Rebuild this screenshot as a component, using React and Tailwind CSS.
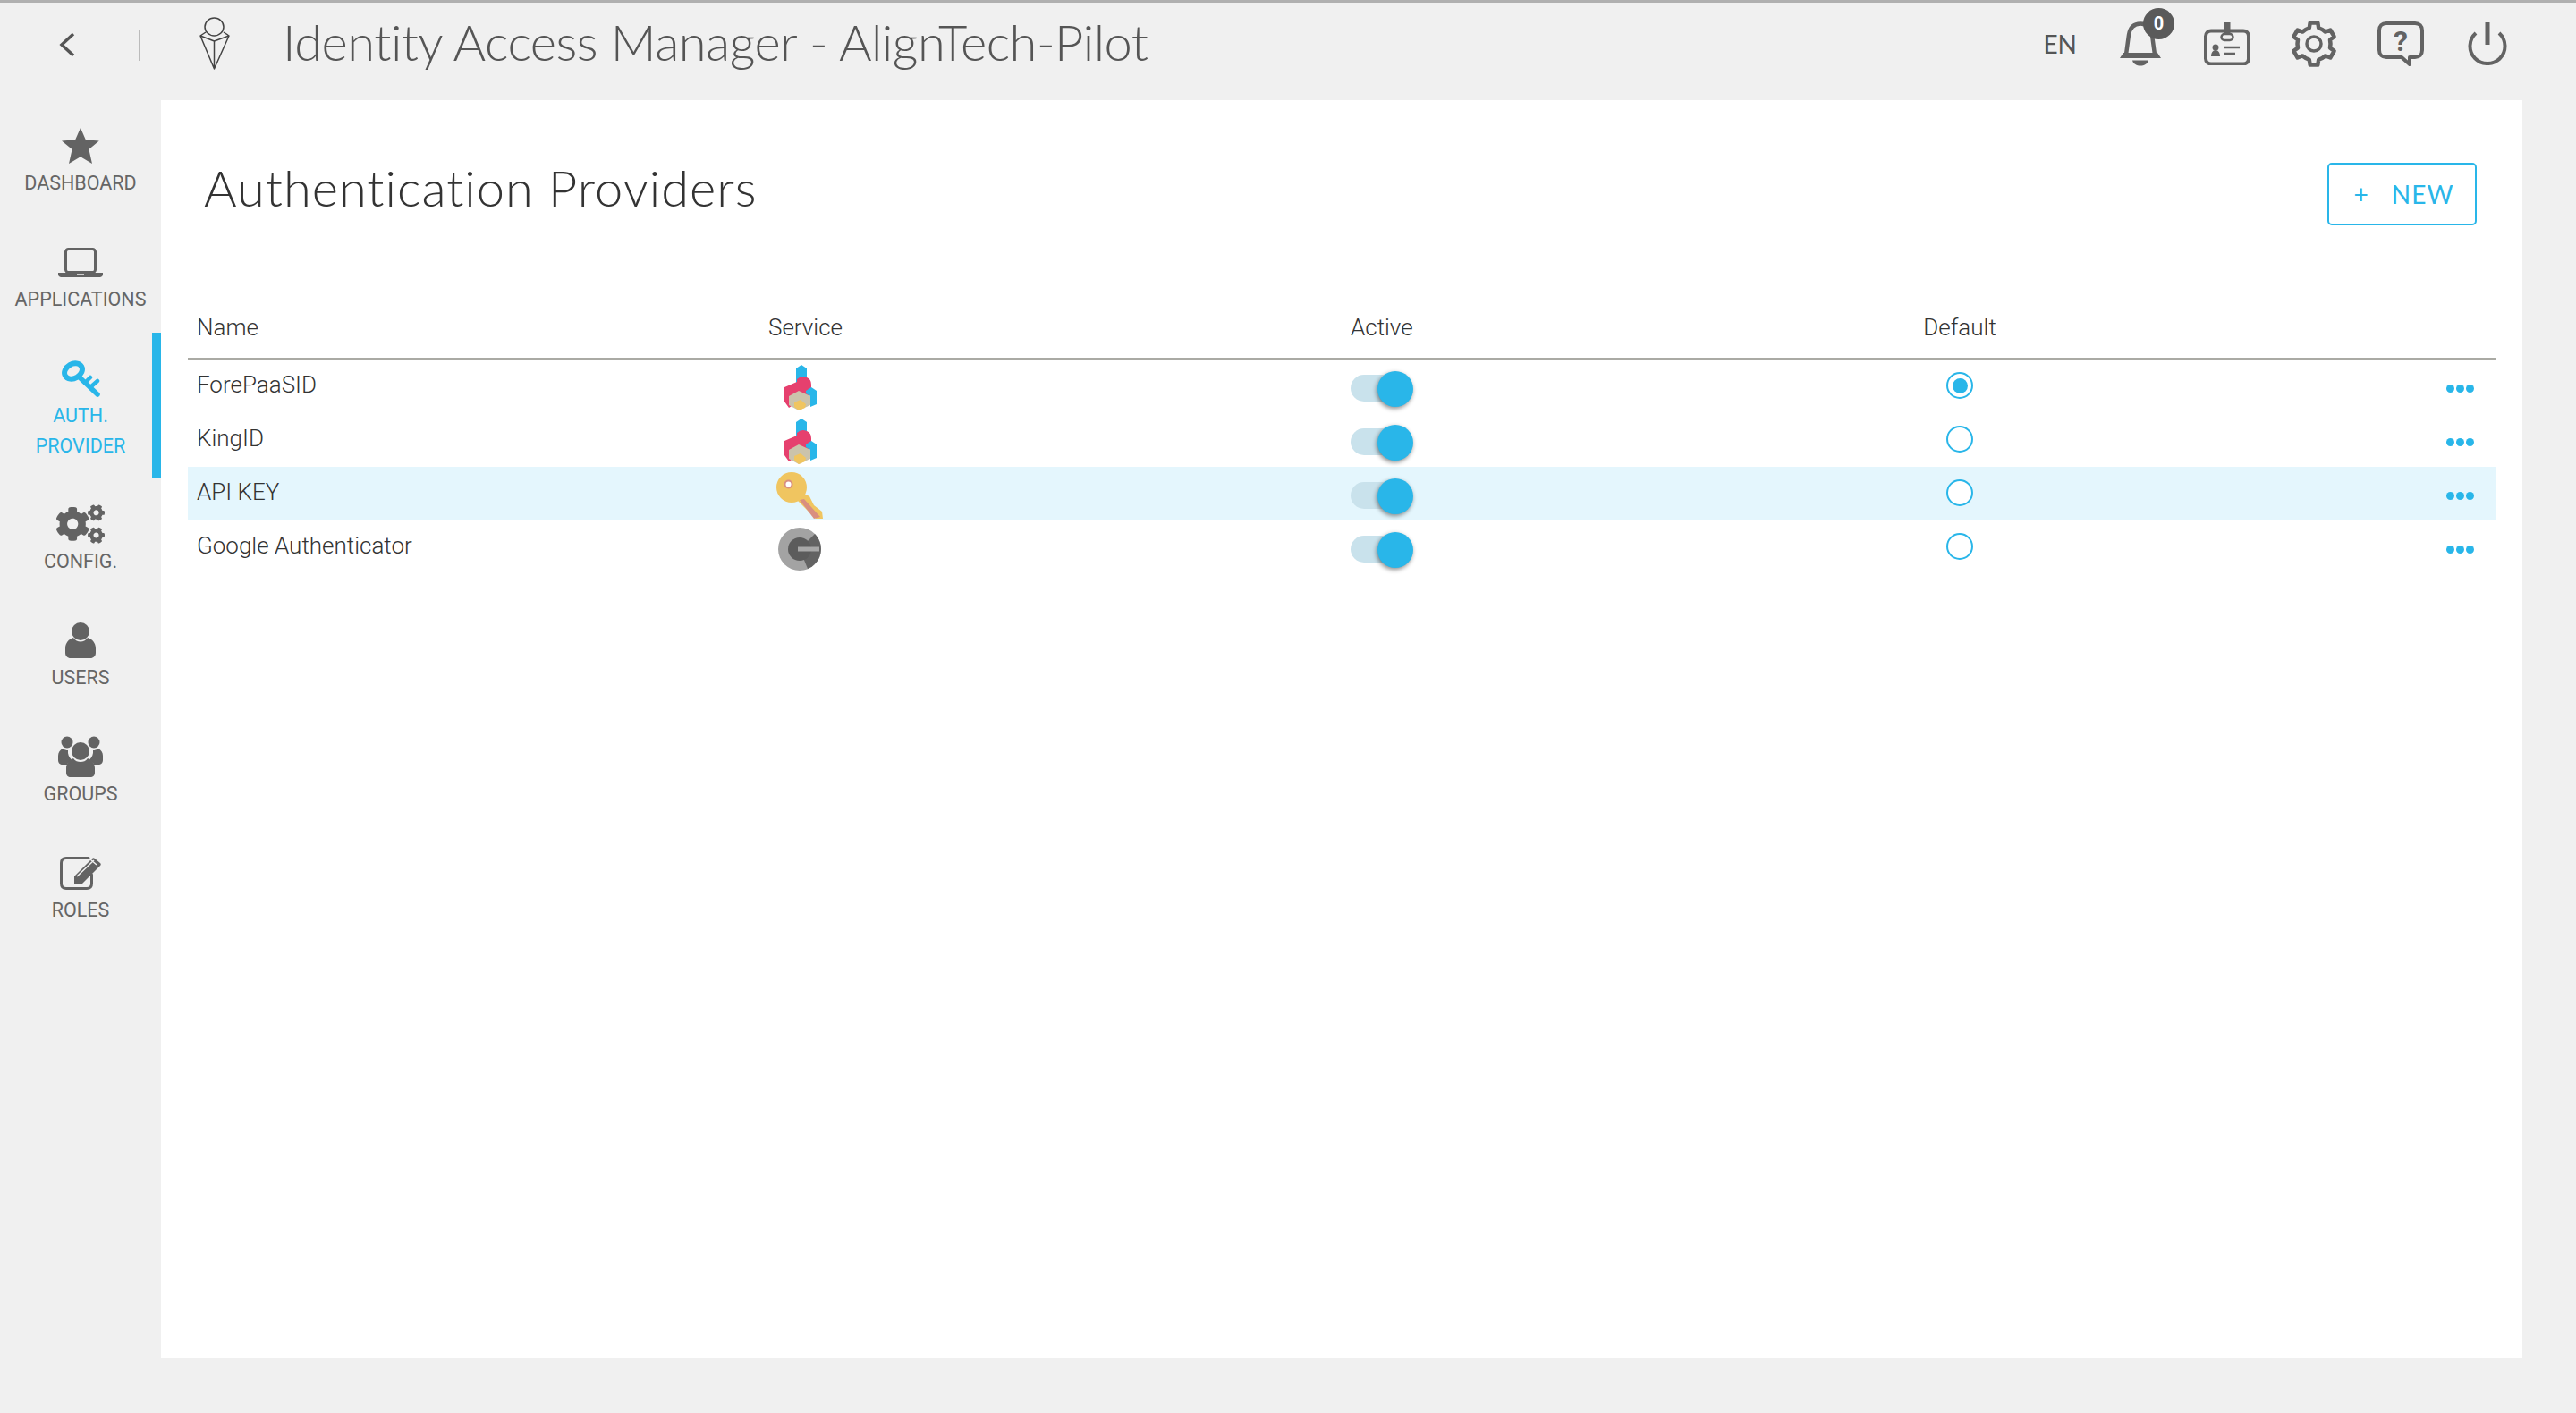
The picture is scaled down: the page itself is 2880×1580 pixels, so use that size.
import { FaCogs } from "react-icons/fa";

const providers = [
  { name: "ForePaaSID", icon: "cube", isDefault: true },
  { name: "KingID", icon: "cube" },
  { name: "API KEY", icon: "key", highlighted: true },
  { name: "Google Authenticator", icon: "google" },
];

function gearPath(cx, cy, outer, inner, teeth) {
  const pts = [];
  const step = (Math.PI * 2) / teeth;
  for (let i = 0; i < teeth; i++) {
    const a = -Math.PI / 2 + i * step;
    [
      [-0.5, inner],
      [-0.27, inner],
      [-0.17, outer],
      [0.17, outer],
      [0.27, inner],
    ].forEach(([off, r]) => {
      const t = a + off * step;
      pts.push(`${(cx + r * Math.cos(t)).toFixed(1)} ${(cy + r * Math.sin(t)).toFixed(1)}`);
    });
  }
  return `M${pts.join("L")}Z`;
}

function StarIcon() {
  return (
    <svg width="42" height="40" viewBox="0 0 42 40" fill="#636363">
      <path d="M21 0l5.800 13.200 15 1.300-11.400 9.600L34 40 21 32.200 8 40l3.600-15.900L0 14.500l15.200-1.300z" />
    </svg>
  );
}

function LaptopIcon() {
  return (
    <svg width="50" height="33" viewBox="0 0 50 33" fill="none">
      <rect x="8.500" y="1.500" width="33" height="26" rx="3" stroke="#636363" strokeWidth="3" />
      <path d="M0 28h50v1.500c0 2-1.500 3.500-3.500 3.500h-43C1.500 33 0 31.500 0 29.500z" fill="#636363" />
      <rect x="21" y="29" width="8" height="1.500" fill="#cfcfcf" />
    </svg>
  );
}

function KeyIcon() {
  return (
    <svg width="43" height="42" viewBox="0 0 43 42" fill="none" stroke="#29b6e9" strokeLinecap="round">
      <ellipse cx="13" cy="13" rx="10.500" ry="8" transform="rotate(-30 13 13)" strokeWidth="6" />
      <path d="M21 21l19 18" strokeWidth="5.500" />
      <path d="M32 31l8-7M26 26l6-6" strokeWidth="4.500" />
    </svg>
  );
}

function UserIcon() {
  return (
    <svg width="34" height="40" viewBox="0 0 34 40" fill="#636363">
      <circle cx="17" cy="10" r="10" />
      <path d="M9 17c2 3 5 4.500 8 4.500s6-1.500 8-4.500c5 1.500 9 6 9 12v5c0 3.500-2.500 6-6 6H6c-3.500 0-6-2.500-6-6v-5c0-6 4-10.500 9-12z" />
    </svg>
  );
}

function GroupIcon() {
  return (
    <svg width="50" height="46" viewBox="0 0 50 46" fill="#636363">
      <circle cx="10" cy="7" r="6.500" />
      <circle cx="40" cy="7" r="6.500" />
      <path d="M5 14c2 1.500 4 2 6 2-.5 4 1 8 4 10.500-2 1.500-4 3-5 5.500H5c-3 0-5-2-5-5v-5c0-3.500 2-6.500 5-8z" />
      <path d="M45 14c-2 1.500-4 2-6 2 .5 4-1 8-4 10.500 2 1.500 4 3 5 5.500h5c3 0 5-2 5-5v-5c0-3.500-2-6.500-5-8z" />
      <circle cx="25" cy="17" r="10" />
      <path d="M17 25c2 3 5 4 8 4s6-1 8-4c4 1.500 8 5 8 11v5c0 3-2 5-5 5H14c-3 0-5-2-5-5v-5c0-6 4-9.500 8-11z" />
    </svg>
  );
}

function RolesIcon() {
  return (
    <svg width="46" height="37" viewBox="0 0 46 37" fill="none">
      <path d="M32 1.500H7C3.500 1.500 1.500 3.500 1.500 7v23c0 3.500 2 5.500 5.500 5.500h23c3.500 0 5.500-2 5.500-5.500V20" stroke="#636363" strokeWidth="3" strokeLinecap="round" />
      <path d="M16 22l20-20c1-1 2-1 3 0l6 5c1 1 1 2 0 3L25 30l-9 0z" fill="#636363" />
      <path d="M19 22l19-18M34 3l7 6" stroke="#f0f0f0" strokeWidth="1.500" />
    </svg>
  );
}

function BellIcon() {
  return (
    <svg width="46" height="50" viewBox="0 0 46 50" fill="none">
      <path d="M7 37l3-22C11.500 6 16 2.500 23 2.500S34.500 6 36 15l3 22" stroke="#636363" strokeWidth="4.500" />
      <path d="M4 35h38l4 6H0z" fill="#636363" />
      <path d="M14 43.500h18c-1 4-5 6-9 6s-8-2-9-6z" fill="#636363" />
    </svg>
  );
}

function BadgeCardIcon() {
  return (
    <svg width="52" height="48" viewBox="0 0 52 48" fill="none" stroke="#636363">
      <rect x="2" y="9.500" width="48" height="37" rx="6" strokeWidth="4" />
      <rect x="19.500" y="13" width="13" height="7" rx="3.500" strokeWidth="2.500" fill="#f0f0f0" />
      <path d="M26 0v13" strokeWidth="7" />
      <circle cx="13" cy="28" r="3.500" fill="#636363" stroke="none" />
      <path d="M8 38c0-4 2-7 5-7s5 3 5 7z" fill="#636363" stroke="none" />
      <path d="M22 28h18" strokeWidth="2.500" />
      <path d="M22 35h13" strokeWidth="2.500" />
    </svg>
  );
}

function GearIcon() {
  return (
    <svg width="52" height="52" viewBox="0 0 52 52" fill="none" stroke="#636363">
      <path d={gearPath(26, 26, 24, 18.5, 6)} strokeWidth="4.500" strokeLinejoin="round" />
      <circle cx="26" cy="26" r="8" strokeWidth="3.500" />
    </svg>
  );
}

function HelpIcon() {
  return (
    <svg width="52" height="50" viewBox="0 0 52 50" fill="none">
      <path d="M10 2h32c5 0 8 3 8 8v22c0 5-3 8-8 8h-6v8l-9-8H10c-5 0-8-3-8-8V10c0-5 3-8 8-8z" stroke="#636363" strokeWidth="4" strokeLinejoin="round" />
      <text x="26" y="33" textAnchor="middle" fontFamily="Roboto, sans-serif" fontWeight="700" fontSize="32" fill="#636363">?</text>
    </svg>
  );
}

function PowerIcon() {
  return (
    <svg width="44" height="48" viewBox="0 0 44 48" fill="none" stroke="#636363">
      <path d="M22 0v25" strokeWidth="5" />
      <path d="M9 12a19.500 19.500 0 1 0 26 0" strokeWidth="4" />
    </svg>
  );
}

function LogoIcon() {
  return (
    <svg width="34" height="60" viewBox="0 0 34 60" fill="none" stroke="#444" strokeWidth="1.500">
      <ellipse cx="16.500" cy="11" rx="10.500" ry="10" />
      <path d="M7 17L1 21l15.500 37L33 21l-6-4M1 21l15.500 6L33 21M16.500 27v31" strokeLinejoin="round" />
    </svg>
  );
}

function CubeService() {
  return (
    <svg width="37" height="51" viewBox="0 0 37 51">
      <path d="M14 4l6-4 6 4v16l-12 2z" fill="#29b6e9" />
      <path d="M1 25l14-6v-3q5-5 11-2 5 2 5 8v10L6 48l-5-7z" fill="#e6406e" />
      <path d="M25 29l6-4 6 4v15l-7 3V35l-5-3z" fill="#29b6e9" />
      <path d="M6 35l11-6 13 6v10l-13 6-11-6z" fill="#cbc3ab" />
      <path d="M12 42l7-3 6 5-1 4-7 3-5-4z" fill="#f0c560" />
    </svg>
  );
}

function KeyService() {
  return (
    <svg width="52" height="52" viewBox="0 0 52 52">
      <path d="M31 24l6 3 5 10 9 7 1 8h-8L24 32z" fill="#f0c560" />
      <path d="M26 31l5-1 18 20-7 2z" fill="#d98f80" />
      <circle cx="17" cy="17" r="17" fill="#f0c560" />
      <circle cx="13.500" cy="13.500" r="5" fill="#d98f80" />
      <circle cx="13.500" cy="13.500" r="3" fill="#ffffff" />
    </svg>
  );
}

function GoogleService() {
  return (
    <svg width="48" height="48" viewBox="0 0 48 48">
      <circle cx="24" cy="24" r="24" fill="#a3a3a3" />
      <path d="M24 24L41 7a24 24 0 0 1-8 39z" fill="#636363" />
      <circle cx="24" cy="24" r="13" fill="#5c5c5c" />
      <rect x="22" y="21.500" width="24" height="5" fill="#a8a8a8" />
    </svg>
  );
}

const serviceIcons = { cube: CubeService, key: KeyService, google: GoogleService };

const navItems = [
  { label: "DASHBOARD", Icon: StarIcon },
  { label: "APPLICATIONS", Icon: LaptopIcon },
  { label: "AUTH.\nPROVIDER", Icon: KeyIcon, active: true },
  { label: "CONFIG.", Icon: () => <FaCogs size={54} color="#636363" /> },
  { label: "USERS", Icon: UserIcon },
  { label: "GROUPS", Icon: GroupIcon },
  { label: "ROLES", Icon: RolesIcon },
];

function NavItem({ label, Icon, active }) {
  return (
    <div
      className={`relative flex flex-col items-center pt-[26px] ${
        active ? "h-[163px] text-[#29b6e9]" : "h-[130px] text-[#666666]"
      }`}
    >
      <div className="flex h-[50px] items-center justify-center">
        <Icon />
      </div>
      <div className="whitespace-pre-line text-center text-[21.5px] leading-[34px]">{label}</div>
      {active && <div className="absolute right-0 top-0 h-full w-[10px] bg-[#29b6e9]" />}
    </div>
  );
}

function Toggle() {
  return (
    <div className="relative h-[30px] w-[60px] translate-y-[2px] rounded-full bg-[#c9e2ec]">
      <div className="absolute left-[30px] top-[-4px] h-[40px] w-[40px] rounded-full bg-[#29b6e9] shadow-[-1px_2px_5px_rgba(0,0,0,0.45)]" />
    </div>
  );
}

function Radio({ checked }) {
  return (
    <div className="flex h-[30px] w-[30px] items-center justify-center rounded-full border-2 border-[#29b6e9] bg-white">
      {checked && <div className="h-[17px] w-[17px] rounded-full bg-[#29b6e9]" />}
    </div>
  );
}

function ProviderRow({ provider }) {
  const ServiceIcon = serviceIcons[provider.icon];
  return (
    <div
      className={`grid h-[60px] grid-cols-[639px_651px_640px_82px_1fr] items-center pl-[10px] text-[26px] font-light text-[#333333] ${
        provider.highlighted ? "bg-[#e4f6fd]" : ""
      }`}
    >
      <div className="-translate-y-[2px]">{provider.name}</div>
      <div className="flex h-[60px] w-[70px] items-center justify-center pt-[3px]">
        <ServiceIcon />
      </div>
      <div>
        <Toggle />
      </div>
      <div className="flex -translate-y-[1px] justify-center">
        <Radio checked={provider.isDefault} />
      </div>
      <div className="flex translate-y-[2px] justify-end gap-[2px] pr-[24px]">
        <span className="h-[9px] w-[9px] rounded-full bg-[#29b6e9]" />
        <span className="h-[9px] w-[9px] rounded-full bg-[#29b6e9]" />
        <span className="h-[9px] w-[9px] rounded-full bg-[#29b6e9]" />
      </div>
    </div>
  );
}

export default function App() {
  return (
    <div className="flex h-[1580px] w-[2880px] flex-col overflow-hidden bg-[#f0f0f0] font-['Roboto',sans-serif]">
      <header className="flex h-[112px] shrink-0 items-center border-t-[3px] border-[#b0b0b0] pb-[18px]">
        <svg className="ml-[66px] translate-y-[1px]" width="18" height="28" viewBox="0 0 18 28" fill="none" stroke="#555" strokeWidth="3.500">
          <path d="M16 2L3 14l13 12" />
        </svg>
        <div className="ml-[71px] h-[35px] w-px translate-y-[2px] bg-[#bbbbbb]" />
        <div className="ml-[67px]">
          <LogoIcon />
        </div>
        <h1 className="mb-[4px] ml-[59px] font-['Lato',sans-serif] text-[56px] font-light leading-none tracking-[-0.5px] text-[#555555]">
          Identity Access Manager - AlignTech-Pilot
        </h1>
        <div className="ml-auto flex items-center pr-[51px]">
          <span className="mr-[22px] font-['Lato',sans-serif] text-[28px] text-[#555555]">EN</span>
          <div className="relative flex w-[97px] justify-center">
            <BellIcon />
            <span className="absolute left-[52px] top-[-15px] flex h-[35px] w-[35px] items-center justify-center rounded-full bg-[#5a5a5a] text-[20px] font-bold text-white">
              0
            </span>
          </div>
          <div className="flex w-[97px] justify-center">
            <BadgeCardIcon />
          </div>
          <div className="flex w-[97px] justify-center">
            <GearIcon />
          </div>
          <div className="flex w-[97px] justify-center">
            <HelpIcon />
          </div>
          <div className="flex w-[97px] justify-center">
            <PowerIcon />
          </div>
        </div>
      </header>

      <div className="flex flex-1">
        <nav className="w-[180px] shrink-0">
          {navItems.map((item) => (
            <NavItem key={item.label} {...item} />
          ))}
        </nav>

        <main className="mb-[61px] w-[2640px] bg-white px-[30px]">
          <div className="flex items-start justify-between pr-[21px] pt-[70px]">
            <h2 className="pl-[18px] font-['Lato',sans-serif] text-[56px] font-light leading-[56px] tracking-[1px] text-[#333333]">
              Authentication Providers
            </h2>
            <button className="flex h-[70px] w-[167px] items-center justify-center gap-[26px] rounded-[5px] border-2 border-[#29b6e9] pl-[4px] font-['Lato',sans-serif] text-[28px] text-[#29b6e9]">
              <span>+</span>
              <span className="tracking-[1px]">NEW</span>
            </button>
          </div>

          <div className="mt-[80px]">
            <div className="grid h-[70px] grid-cols-[639px_651px_640px_82px_1fr] items-center border-b-2 border-[#aaaaa4] pl-[10px] text-[26px] font-light text-[#333333]">
              <div>Name</div>
              <div>Service</div>
              <div>Active</div>
              <div className="whitespace-nowrap text-center">Default</div>
            </div>
            {providers.map((provider) => (
              <ProviderRow key={provider.name} provider={provider} />
            ))}
          </div>
        </main>
      </div>
    </div>
  );
}
